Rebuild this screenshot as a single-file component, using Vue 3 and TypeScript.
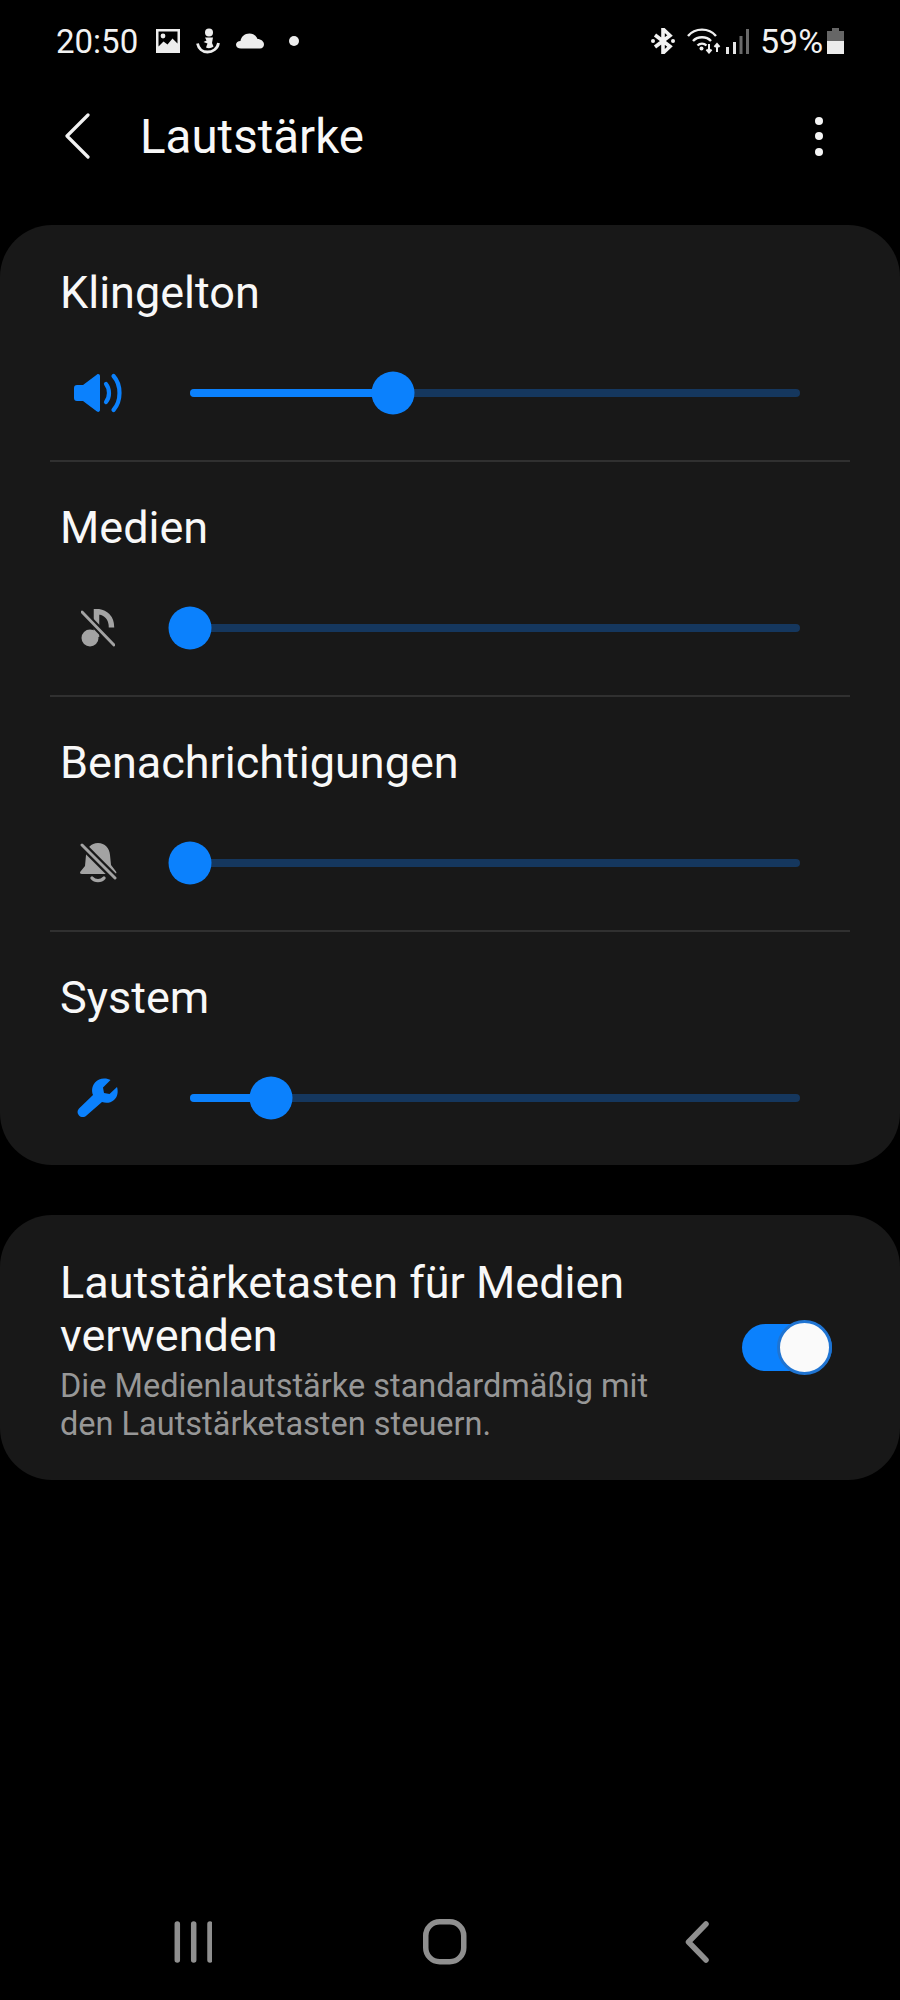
<script setup lang="ts">
interface Row { title: string; icon: string; pct: number; active: boolean }
const rows: Row[] = [
  { title: 'Klingelton', icon: 'speaker', pct: 33.3, active: true },
  { title: 'Medien', icon: 'music', pct: 0, active: false },
  { title: 'Benachrichtigungen', icon: 'bell', pct: 0, active: false },
  { title: 'System', icon: 'wrench', pct: 13.3, active: true },
]
</script>

<template>
  <div class="page">
    <div class="status">
      <span class="clock">20:50</span>
      <svg class="s-img" width="26" height="26" viewBox="0 0 26 26">
        <path fill-rule="evenodd" fill="#ededed" d="M1 1h24v24H1zM3.500 3.500v15l5-5 4 3 5-6 5 5v-12z" />
        <circle cx="8" cy="8" r="2.400" fill="#ededed" />
      </svg>
      <svg class="s-fig" width="24" height="26" viewBox="0 0 24 26">
        <circle cx="13" cy="4.500" r="4" fill="#ededed" />
        <path d="M9 9.500h8l-1 5.500 1.500 3.500c-2.500 2-5.500 2-7.500 1l1.500-4-4-1.500 3-1.500z" fill="#ededed" />
        <path d="M1.500 15.500c1 5 5 8.500 10 8.500s10-3 11-9" fill="none" stroke="#ededed" stroke-width="2.800" />
      </svg>
      <svg class="s-cloud" width="28" height="16" viewBox="0 0 28 16">
        <path fill="#ededed" d="M5 15.500C2 15.500 0 14 0 11.700 0 9.500 2 8 4.500 8 5 4 8.500 .5 13.500 .5c4 0 7 2.500 8 5.500 3.500 0 6.500 2.500 6.500 5.300 0 2.400-1.500 4.200-4 4.200z" />
      </svg>
      <span class="s-dot"></span>
      <span class="spacer"></span>
      <svg class="s-bt" width="24" height="26" viewBox="0 0 24 26">
        <path d="M4 7l15 11.500-7 6.500V1l7 6.500L4 19" fill="none" stroke="#f2f2f2" stroke-width="3.600" />
        <circle cx="2" cy="13" r="2" fill="#f2f2f2" />
        <circle cx="22" cy="13" r="2" fill="#f2f2f2" />
      </svg>
      <svg class="s-wifi" width="34" height="26" viewBox="0 0 34 26">
        <path d="M1 8c7-8.500 21-8.500 28 0M6 13c4.500-5 13.500-5 18 0M10.500 17.500c2.500-2.500 6.500-2.500 9 0" fill="none" stroke="#efefef" stroke-width="2.400" />
        <circle cx="14.500" cy="20.500" r="2" fill="#efefef" />
        <path d="M22 16v8M19.500 21.500l2.500 3 2.500-3M30 24v-8M27.500 19l2.500-3 2.500 3" fill="none" stroke="#efefef" stroke-width="2" />
      </svg>
      <svg class="s-sig" width="23" height="25" viewBox="0 0 23 25">
        <rect x="0" y="18" width="3" height="7" fill="#e6e6e6" />
        <rect x="7" y="13" width="3" height="12" fill="#e6e6e6" />
        <rect x="13.500" y="7" width="3" height="18" fill="#6a6a6a" />
        <rect x="20" y="0" width="3" height="25" fill="#6a6a6a" />
      </svg>
      <span class="pct">59%</span>
      <svg class="s-bat" width="17" height="26" viewBox="0 0 17 26">
        <path d="M5 0h7v3h5v10H0V3h5z" fill="#666" />
        <rect x="0" y="13" width="17" height="13" fill="#ececec" />
      </svg>
    </div>

    <header class="head">
      <svg class="back" width="26" height="46" viewBox="0 0 26 46">
        <path d="M24 2L3 23l21 21" fill="none" stroke="#f2f2f2" stroke-width="3.200" stroke-linecap="round" stroke-linejoin="round" />
      </svg>
      <h1 class="title">Lautstärke</h1>
      <div class="kebab"><i></i><i></i><i></i></div>
    </header>

    <section class="card sliders">
      <div v-for="r in rows" :key="r.title" class="row">
        <div class="row-title">{{ r.title }}</div>
        <div class="ctl">
          <div class="ico">
            <svg v-if="r.icon === 'speaker'" width="50" height="40" viewBox="0 0 50 40">
              <path fill="#0b81fd" d="M1 15c0-2 1-3 3-3h6L24 1.500c1.500-1 3 0 3 1.500v34c0 1.500-1.500 2.500-3 1.500L10 28H4c-2 0-3-1-3-3z" />
              <path d="M33 11c4 5 4 13 0 18M40.500 3c8 9 8 25 0 34" fill="none" stroke="#0b81fd" stroke-width="4.200" stroke-linecap="round" />
            </svg>
            <svg v-else-if="r.icon === 'music'" width="34" height="38" viewBox="0 0 34 38">
              <circle cx="9" cy="29" r="8.500" fill="#a3a3a3" />
              <path d="M15.500 28V2.500c9 .5 15 6 15 16" fill="none" stroke="#a3a3a3" stroke-width="5.500" />
              <path d="M1 3l32 33" stroke="#181818" stroke-width="7" />
              <path d="M1 3l32 33" stroke="#a3a3a3" stroke-width="3" stroke-linecap="round" />
            </svg>
            <svg v-else-if="r.icon === 'bell'" width="38" height="40" viewBox="0 0 38 40">
              <path fill="#a3a3a3" d="M19 0c7 0 11.500 5 12 12l1 10 5 6.500c1 1.500 0 2.500-1 2.500H3c-2 0-2.500-1.500-1.500-2.500L6 23l1-11C7.500 5 12 0 19 0z" />
              <path d="M13 35c3 3.500 9 3.500 12 0" fill="none" stroke="#a3a3a3" stroke-width="3.400" stroke-linecap="round" />
              <path d="M3 2l33 33" stroke="#181818" stroke-width="7.500" />
              <path d="M3 2l33 33" stroke="#a3a3a3" stroke-width="3" stroke-linecap="round" />
            </svg>
            <svg v-else width="42" height="40" viewBox="0 0 42 40">
              <path fill="#0b81fd" d="M27 .5c3 0 5 .6 6.500 1.500L26 9.500l1 5.500 5.500 1L40 9c1.500 5 .5 10-3 13-3.500 3-8 3.500-12 2L9.500 37.500c-2 2-5.500 2-7.500 0s-2-5 0-7L16 17c-2-5-.5-9.500 2-12.500C20.500 2 23.500.5 27 .5z" />
            </svg>
          </div>
          <div class="track">
            <div class="fill" :style="{ width: r.pct + '%' }"></div>
            <div class="thumb" :style="{ left: r.pct + '%' }"></div>
          </div>
        </div>
      </div>
    </section>

    <section class="card keys">
      <div class="keys-text">
        <div class="keys-title">Lautstärketasten für Medien verwenden</div>
        <div class="keys-sub">Die Medienlautstärke standardmäßig mit den Lautstärketasten steuern.</div>
      </div>
      <div class="toggle"><span class="knob"></span></div>
    </section>

    <div class="grow"></div>

    <nav class="nav">
      <svg width="38" height="42" viewBox="0 0 38 42">
        <path d="M3.300 3v36M19.700 3v36M36 3v36" stroke="#8f8f8f" stroke-width="5.500" stroke-linecap="round" />
      </svg>
      <svg width="44" height="46" viewBox="0 0 44 46">
        <rect x="2.750" y="2.750" width="38" height="40" rx="14" fill="none" stroke="#8f8f8f" stroke-width="5.500" />
      </svg>
      <svg width="24" height="42" viewBox="0 0 24 42">
        <path d="M21 3L3.500 21 21 39" fill="none" stroke="#8f8f8f" stroke-width="5.500" stroke-linecap="round" stroke-linejoin="round" />
      </svg>
    </nav>
  </div>
</template>

<style scoped>
.page {
  width: 900px;
  height: 2000px;
  background: #000;
  color: #fff;
  font-family: Roboto, "Liberation Sans", sans-serif;
  display: flex;
  flex-direction: column;
  overflow: hidden;
}
.status {
  height: 82px;
  padding: 0 56px;
  display: flex;
  align-items: center;
  font-size: 33px;
  color: #f2f2f2;
  box-sizing: border-box;
}
.clock { width: 82px; margin-right: 17px; }
.s-fig { margin-left: 15px; }
.s-cloud { margin-left: 16px; }
.s-dot {
  width: 10px;
  height: 10px;
  border-radius: 50%;
  background: #ededed;
  margin-left: 25px;
}
.spacer { flex: 1; }
.s-wifi { margin-left: 12px; }
.s-sig { margin-left: 5px; }
.pct { margin-left: 11px; width: 63px; font-size: 34px; }
.s-bat { margin-left: 4px; }
.head {
  height: 108px;
  padding: 0 0 0 64px;
  display: flex;
  align-items: center;
  box-sizing: border-box;
}
.title {
  margin: 4px 0 0 50px;
  font-size: 47.500px;
  font-weight: 400;
  line-height: 1;
  flex: 1;
  color: #f8f8f8;
}
.kebab {
  width: 8px;
  margin-right: 77px;
  display: flex;
  flex-direction: column;
  gap: 7.500px;
}
.kebab i {
  width: 8px;
  height: 8px;
  border-radius: 50%;
  background: #f5f5f5;
}
.card {
  background: #181818;
  border-radius: 52px;
}
.sliders {
  margin-top: 35px;
}
.row {
  height: 235px;
  padding: 0 50px;
  box-sizing: border-box;
  position: relative;
}
.row + .row::before {
  content: "";
  position: absolute;
  left: 50px;
  right: 50px;
  top: 0;
  height: 2px;
  background: #303030;
}
.row-title {
  padding: 43px 0 0 10px;
  font-size: 45px;
  line-height: 50px;
  color: #f8f8f8;
}
.ctl {
  display: flex;
  align-items: center;
  height: 50px;
  margin-top: 50px;
}
.ico {
  width: 90px;
  height: 50px;
  display: flex;
  align-items: center;
  justify-content: center;
  margin-left: 3px;
  margin-right: 47px;
}
.track {
  position: relative;
  width: 610px;
  height: 8px;
  border-radius: 4px;
  background: #15375e;
}
.fill {
  height: 100%;
  border-radius: 4px;
  background: #0b81fd;
}
.thumb {
  position: absolute;
  top: 50%;
  width: 43px;
  height: 43px;
  border-radius: 50%;
  background: #0b81fd;
  transform: translate(-50%, -50%);
}
.keys {
  margin-top: 50px;
  height: 265px;
  padding: 41px 68px 0 60px;
  box-sizing: border-box;
  display: flex;
  align-items: flex-start;
  justify-content: space-between;
}
.keys-text { width: 610px; }
.keys-title {
  font-size: 45px;
  line-height: 53px;
  color: #f8f8f8;
}
.keys-sub {
  margin-top: 5px;
  font-size: 32.500px;
  line-height: 38px;
  color: #979797;
}
.toggle {
  position: relative;
  width: 90px;
  height: 47px;
  margin-top: 68px;
  border-radius: 24px;
  background: #0b81fd;
}
.knob {
  position: absolute;
  right: 0;
  top: -4px;
  width: 55px;
  height: 55px;
  box-sizing: border-box;
  border-radius: 50%;
  background: #fafafa;
  border: 3px solid #1f74d2;
}
.grow { flex: 1; }
.nav {
  height: 78px;
  margin-bottom: 19px;
  display: flex;
  align-items: center;
  padding: 0 0 0 174px;
}
.nav svg:nth-child(2) { margin-left: 211px; }
.nav svg:nth-child(3) { margin-left: 218px; }
</style>
